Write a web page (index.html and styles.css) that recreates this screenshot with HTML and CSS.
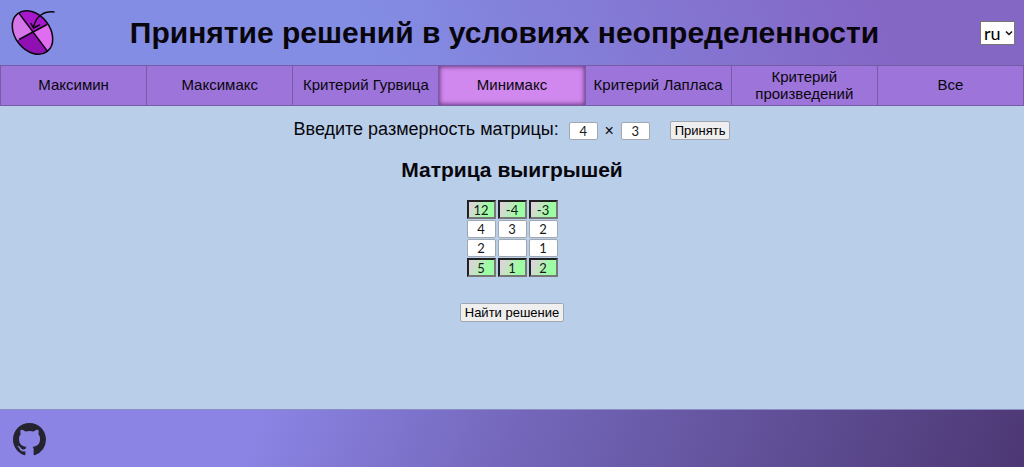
FILE: index.html
```html
<!DOCTYPE html>
<html lang="ru">
<head>
<meta charset="utf-8">
<meta name="viewport" content="width=device-width, initial-scale=1">
<title>Принятие решений в условиях неопределенности</title>
<link rel="stylesheet" href="styles.css">
</head>
<body>
<header class="header">
  <svg class="logo" viewBox="0 0 46 46" aria-hidden="true">
    <defs><clipPath id="disc"><ellipse cx="22.5" cy="22.5" rx="17.5" ry="24" transform="rotate(-38 22.5 22.5)"/></clipPath></defs>
    <g clip-path="url(#disc)">
      <path fill="#a717cc" d="M23 22 2-6H50V7.500Z"/>
      <path fill="#e06cf0" d="M23 22 50 7.500V58Z"/>
      <path fill="#9010b4" d="M23 22 50 58H-4V36.500Z"/>
      <path fill="#d676e8" d="M23 22-4 36.500V-6H2Z"/>
      <path d="M5-2 42 47.300M9 29.500 37 14.500" fill="none" stroke="#0c0610" stroke-width="1.500"/>
    </g>
    <ellipse cx="22.5" cy="22.5" rx="17.5" ry="24" transform="rotate(-38 22.5 22.5)" fill="none" stroke="#0c0610" stroke-width="1.500"/>
    <path d="M44 2C34 1 26 6 23.500 17M21 13.500l2.500 4.500 6-3" fill="none" stroke="#0c0610" stroke-width="1.500" stroke-linecap="round"/>
  </svg>
  <h1 class="title">Принятие решений в условиях неопределенности</h1>
  <div class="lang-box">
    <select class="lang" aria-label="Язык"><option>ru</option><option>en</option></select>
    <svg class="lang-arrow" viewBox="0 0 8 6" aria-hidden="true"><path d="m1 1.500 3 3 3-3" fill="none" stroke="#111" stroke-width="1.500"/></svg>
  </div>
</header>
<nav class="tabs">
  <button class="tab" type="button">Максимин</button>
  <button class="tab" type="button">Максимакс</button>
  <button class="tab" type="button">Критерий Гурвица</button>
  <button class="tab tab-active" type="button" aria-current="page">Минимакс</button>
  <button class="tab" type="button">Критерий Лапласа</button>
  <button class="tab" type="button">Критерий произведений</button>
  <button class="tab" type="button">Все</button>
</nav>
<main class="main">
  <form class="size-form">
    <label class="size-label" for="rows">Введите размерность матрицы:</label>
    <input class="cell" id="rows" type="text" value="4">
    <span class="times">×</span>
    <input class="cell" type="text" value="3" aria-label="Столбцы">
    <button class="button button-accept" type="button">Принять</button>
  </form>
  <h2 class="subtitle">Матрица выигрышей</h2>
  <div class="matrix">
    <input class="cell cell-best" type="text" value="12" aria-label="Строка 1, столбец 1">
    <input class="cell cell-best" type="text" value="-4" aria-label="Строка 1, столбец 2">
    <input class="cell cell-best" type="text" value="-3" aria-label="Строка 1, столбец 3">
    <input class="cell" type="text" value="4" aria-label="Строка 2, столбец 1">
    <input class="cell" type="text" value="3" aria-label="Строка 2, столбец 2">
    <input class="cell" type="text" value="2" aria-label="Строка 2, столбец 3">
    <input class="cell" type="text" value="2" aria-label="Строка 3, столбец 1">
    <input class="cell" type="text" value="" aria-label="Строка 3, столбец 2">
    <input class="cell" type="text" value="1" aria-label="Строка 3, столбец 3">
    <input class="cell cell-best" type="text" value="5" aria-label="Строка 4, столбец 1">
    <input class="cell cell-best" type="text" value="1" aria-label="Строка 4, столбец 2">
    <input class="cell cell-best" type="text" value="2" aria-label="Строка 4, столбец 3">
  </div>
  <button class="button" type="button">Найти решение</button>
</main>
<footer class="footer">
  <a class="github" href="#" aria-label="GitHub">
    <svg class="github-icon" viewBox="0 0 16 16" aria-hidden="true"><path fill="#24232f" d="M8 0C3.58 0 0 3.58 0 8c0 3.54 2.29 6.53 5.47 7.59.4.07.55-.17.55-.38 0-.19-.01-.82-.01-1.49-2.01.37-2.53-.49-2.69-.94-.09-.23-.48-.94-.82-1.13-.28-.15-.68-.52-.01-.53.63-.01 1.08.58 1.23.82.72 1.21 1.87.87 2.33.66.07-.52.28-.87.51-1.07-1.78-.2-3.64-.89-3.64-3.95 0-.87.31-1.59.82-2.15-.08-.2-.36-1.02.08-2.12 0 0 .67-.21 2.2.82.64-.18 1.32-.27 2-.27s1.36.09 2 .27c1.53-1.04 2.2-.82 2.2-.82.44 1.1.16 1.92.08 2.12.51.56.82 1.27.82 2.15 0 3.07-1.87 3.75-3.65 3.95.29.25.54.73.54 1.48 0 1.07-.01 1.93-.01 2.2 0 .21.15.46.55.38A8.01 8.01 0 0 0 16 8c0-4.42-3.58-8-8-8Z"/></svg>
  </a>
</footer>
</body>
</html>
```
FILE: styles.css
```css
* {
  box-sizing: border-box;
}

body {
  display: flex;
  flex-direction: column;
  min-height: 100vh;
  margin: 0;
  background: #b8cee9;
  color: #08060c;
  font-family: "Liberation Sans", Arial, sans-serif;
}

.header {
  display: flex;
  align-items: center;
  justify-content: space-between;
  padding: 10px 9px 9px 10px;
  background: linear-gradient(70deg, #838de4 36%, #8466c5 86%);
}

.logo {
  width: 46px;
  height: 46px;
  overflow: visible;
}

.title {
  margin: 0 27px 0 0;
  font-size: 30px;
  line-height: 36px;
}

.lang-box {
  position: relative;
}

.lang {
  display: block;
  width: 35px;
  height: 24px;
  padding: 0 0 0 3px;
  border: 1px solid #767676;
  border-radius: 0;
  background: #fff;
  color: #000;
  font: 18px/22px Lato, sans-serif;
  appearance: none;
}

.lang-arrow {
  position: absolute;
  top: 9px;
  right: 2px;
  width: 8px;
  pointer-events: none;
}

.tabs {
  display: grid;
  grid-template-columns: repeat(7, 1fr);
  border-left: 1px solid #765ba7;
}

.tab {
  min-height: 41px;
  padding: 1px 8px 3px;
  border: solid #765ba7;
  border-width: 1px 1px 1px 0;
  background: #9d74d9;
  color: inherit;
  font: 15px/17px "Liberation Sans", Arial, sans-serif;
}

.tab-active {
  background: #d088ee;
  box-shadow: inset 0 0 4px 1px #6b3a83;
}

.main {
  display: flex;
  flex: 1;
  flex-direction: column;
  align-items: center;
  padding: 12px 16px;
}

.size-form {
  display: flex;
  flex-wrap: wrap;
  align-items: flex-end;
}

.size-label {
  margin-right: 10px;
  font-size: 18px;
  line-height: 22px;
}

.times {
  width: 23px;
  font-size: 16px;
  text-align: center;
}

.cell {
  width: 29px;
  height: 18px;
  padding: 0;
  border: 1px solid #a0a7b1;
  border-radius: 2px;
  background: #fff;
  color: #181818;
  font: 13px/16px Lato, sans-serif;
  text-align: center;
}

.cell-best {
  height: 19px;
  border: 2px inset #767676;
  border-radius: 0;
  background: linear-gradient(110deg, #dcd4da 10%, #9dfda2 70%);
}

.button {
  height: 19px;
  padding: 0 4px;
  border: 1px solid #a0a7b1;
  border-radius: 2px;
  background: #efefef;
  color: #000;
  font: 13px/16px "Liberation Sans", Arial, sans-serif;
}

.button-accept {
  margin-left: 20px;
}

.subtitle {
  margin: 18px 0;
  font-size: 21px;
  line-height: 24px;
}

.matrix {
  display: grid;
  grid-template-columns: repeat(3, auto);
  gap: 1px 2px;
  margin-bottom: 26px;
}

.footer {
  padding: 13px 13px 11px;
  border-top: 1px solid #8b8cc4;
  background: linear-gradient(110deg, #8b84e4 25%, #7467bb 50%, #4d3874);
}

.github,
.github-icon {
  display: block;
  width: 33px;
}
```
